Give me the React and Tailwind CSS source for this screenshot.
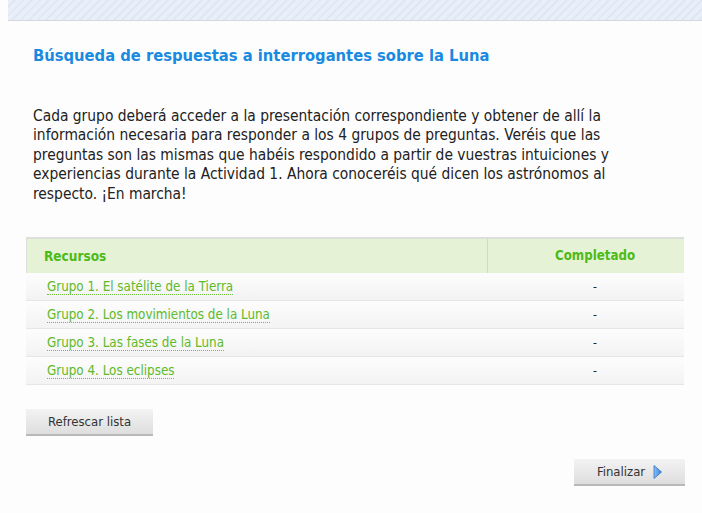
import React from 'react';

const grupos = [
  'Grupo 1. El satélite de la Tierra',
  'Grupo 2. Los movimientos de la Luna',
  'Grupo 3. Las fases de la Luna',
  'Grupo 4. Los eclipses',
];

const font = "font-['DejaVu_Sans_Condensed','DejaVu_Sans',sans-serif]";

export default function App() {
  return (
    <div className={`w-[702px] h-[513px] bg-[#fdfdfd] overflow-hidden ${font}`}>
      {/* striped top band */}
      <div className="ml-2 h-[21px] border-b border-[#d3d8de] bg-[#e9eff9] bg-[repeating-linear-gradient(135deg,#e9eff9_0px,#e9eff9_4px,#dfe7f4_4px,#dfe7f4_6px)]" />

      <div className="pl-[33px] pr-[17px]">
        <h1 className="mt-[25px] text-[16.4px] font-bold text-[#1a8ae0] leading-[20px]">
          Búsqueda de respuestas a interrogantes sobre la Luna
        </h1>

        <p className="mt-[41px] text-[15.4px] leading-[19.4px] text-[#222] whitespace-nowrap">
          Cada grupo deberá acceder a la presentación correspondiente y obtener de allí la<br />
          información necesaria para responder a los 4 grupos de preguntas. Veréis que las<br />
          preguntas son las mismas que habéis respondido a partir de vuestras intuiciones y<br />
          experiencias durante la Actividad 1. Ahora conoceréis qué dicen los astrónomos al<br />
          respecto. ¡En marcha!
        </p>
      </div>

      <div className="ml-[26px] mt-[33px] w-[658px]">
        <div className="flex h-[36px] border-t-2 border-l border-[#dcdfdc] bg-[#e6f2d6]">
          <div className="flex-1 flex items-center pl-[17px] text-[13.5px] font-bold text-[#4cbb17] border-r border-[#d2d8cc]">
            Recursos
          </div>
          <div className="w-[196px] flex items-center justify-center pl-[18px] text-[13.2px] font-bold text-[#4cbb17]">
            Completado
          </div>
        </div>
        {grupos.map((g) => (
          <div
            key={g}
            className="flex h-[28px] border-b border-[#e6e6e6] bg-gradient-to-b from-[#fdfdfd] to-[#f3f3f3]"
          >
            <div className="flex-1 flex items-center pl-[21px]">
              <a className="text-[13.3px] text-[#5fba2a] border-b border-dotted border-[#6cc23a] leading-[15px] cursor-pointer">
                {g}
              </a>
            </div>
            <div className="w-[196px] flex items-center justify-center pl-[18px] text-[12px] text-[#222]">
              -
            </div>
          </div>
        ))}
      </div>

      <div className="ml-[26px] mt-[24px]">
        <button className="w-[127px] h-[27px] bg-gradient-to-b from-[#f3f3f3] to-[#dedede] border-b-2 border-[#b9b9b9] text-[13px] text-[#333]">
          Refrescar lista
        </button>
      </div>

      <div className="flex justify-end pr-[17px] mt-[23px]">
        <button className="w-[111px] h-[27px] flex items-center justify-center gap-[8px] bg-gradient-to-b from-[#f3f3f3] to-[#dedede] border-b-2 border-[#b9b9b9] text-[13px] text-[#333]">
          Finalizar
          <svg width="9" height="14" viewBox="0 0 9 14">
            <defs>
              <linearGradient id="ar" x1="0" y1="0" x2="1" y2="0">
                <stop offset="0" stopColor="#8ec0f0" />
                <stop offset="1" stopColor="#2b7fd6" />
              </linearGradient>
            </defs>
            <path d="M1 0.5 L8.5 7 L1 13.5 Z" fill="url(#ar)" stroke="#2b75c9" strokeWidth="0.8" />
          </svg>
        </button>
      </div>
    </div>
  );
}
